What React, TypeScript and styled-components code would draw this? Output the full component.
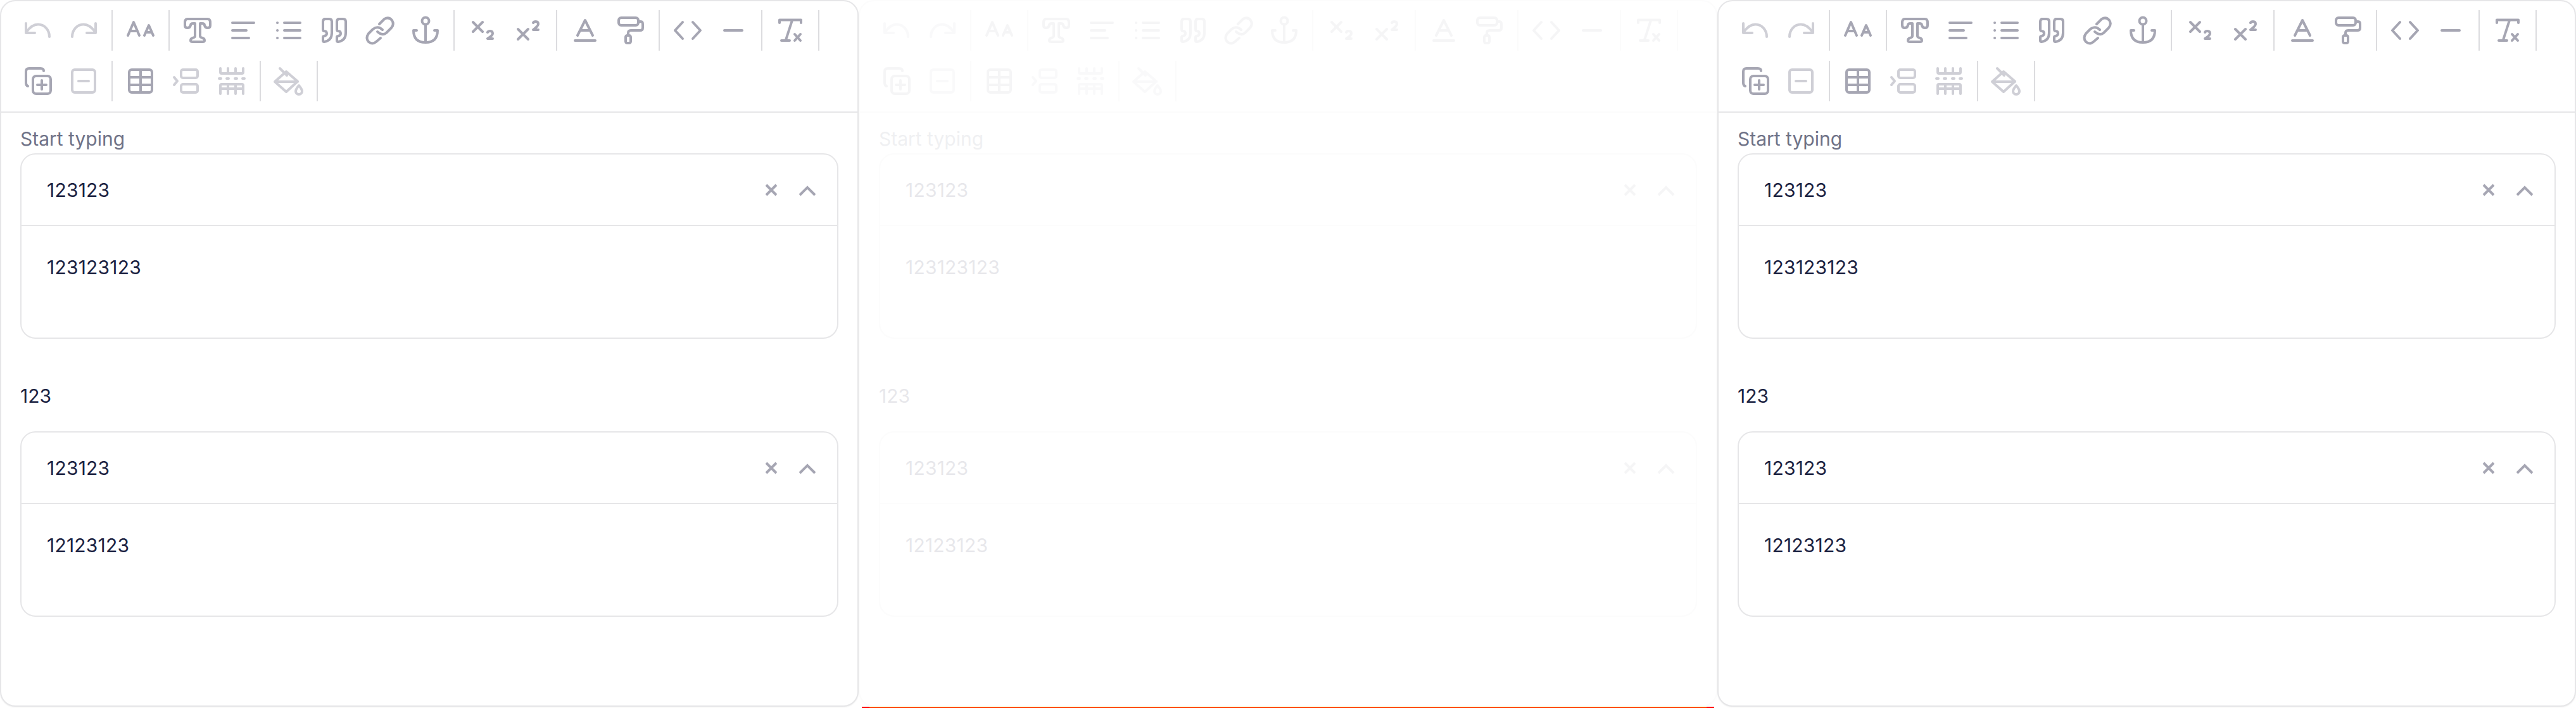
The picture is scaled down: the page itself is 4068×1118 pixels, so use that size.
import React from 'react';
import styled, { createGlobalStyle } from 'styled-components';

const Global = createGlobalStyle`
  html, body { margin: 0; padding: 0; background: #fff; }
  #root { width: 4068px; height: 1118px; }
`;

const Page = styled.div`
  position: relative;
  display: grid;
  grid-template-columns: repeat(3, 1356px);
  height: 1118px;
  overflow: hidden;
  font-family: Inter, "Noto Sans", sans-serif;
`;

const Panel = styled.section<{ $faded?: boolean }>`
  box-sizing: border-box;
  height: 1116px;
  border: 2px solid #e6e6e8;
  border-radius: 24px;
  background: #fff;
  box-shadow: 0 1px 2px rgba(0, 0, 0, 0.06);
  opacity: ${(p) => (p.$faded ? 0.1 : 1)};
`;

const Toolbar = styled.div`
  display: flex;
  flex-wrap: wrap;
  row-gap: 16px;
  align-items: center;
  padding: 14px 22px 16px;
  border-bottom: 2px solid #e6e6e8;
`;

const ToolButton = styled.button<{ $disabled?: boolean }>`
  display: flex;
  width: 72px;
  height: 64px;
  padding: 0;
  border: 0;
  background: none;
  color: ${(p) => (p.$disabled ? '#cfcfd6' : '#a6a6b3')};
`;

const ToolSvg = styled.svg`
  width: 72px;
  height: 64px;
  fill: none;
  stroke: currentColor;
  stroke-width: 4;
  stroke-linecap: round;
  stroke-linejoin: round;
`;

const Separator = styled.span`
  width: 2px;
  height: 64px;
  margin: 0 8px;
  background: #dcdcdf;
`;

const Body = styled.div`
  display: flex;
  flex-direction: column;
  padding: 23px 30px 0;
`;

const FieldLabel = styled.div<{ $muted?: boolean; $gap: number; $top?: number }>`
  height: 36px;
  margin-top: ${(p) => p.$top ?? 0}px;
  margin-bottom: ${(p) => p.$gap}px;
  font-size: 30px;
  line-height: 36px;
  color: ${(p) => (p.$muted ? '#6f7287' : '#1c2342')};
`;

const Card = styled.div`
  box-sizing: border-box;
  height: 293px;
  border: 2px solid #e6e6e8;
  border-radius: 24px;
`;

const CardHeader = styled.div`
  box-sizing: border-box;
  display: flex;
  align-items: center;
  height: 113px;
  padding: 0 33px 0 40px;
  border-bottom: 2px solid #e6e6e8;
`;

const CardTitle = styled.div`
  flex: 1;
  font-size: 30px;
  line-height: 36px;
  letter-spacing: 0.2px;
  color: #1c2342;
`;

const CardText = styled.div`
  padding: 47px 40px 0;
  font-size: 30px;
  line-height: 36px;
  letter-spacing: 0.2px;
  color: #1c2342;
`;

const HeaderIcon = styled.svg<{ $w: number; $gap?: number }>`
  width: ${(p) => p.$w}px;
  height: 24px;
  margin-left: ${(p) => p.$gap ?? 0}px;
  fill: none;
  stroke: #a6a6b3;
  stroke-width: 4;
`;

const LoadBar = styled.div`
  position: absolute;
  left: 1361px;
  bottom: 0;
  width: 1346px;
  height: 2px;
  background: #ff0000;
`;

const LoadBarTop = styled.div`
  position: absolute;
  left: 12px;
  right: 12px;
  top: 0;
  height: 1px;
  background: #ffff00;
`;

const quote = 'M42 14H50Q54 14 54 18V36Q54 48 42 50Q40 50 40 48V43Q40 41 42 41Q46 40 46 37Q46 33 42 33Q40 33 40 30V18Q40 14 44 14';

const icons: Record<string, React.ReactNode> = {
  undo: <path d="M17 21V36H31M18 34C24 26 30 22.5 36 22.5C46 22.5 54 31 54 42" />,
  redo: <path d="M55 21V36H41M54 34C48 26 42 22.5 36 22.5C26 22.5 18 31 18 42" />,
  size: <path d="M16 40L25 19L34 40M19 33H31M42 40L49 24L56 40M44.500 35H53.500" />,
  type: <path d="M20 14H52Q56 14 56 20V24Q56 28 52 28Q48 28 47 24Q47 21 43 21H40V41Q40 43 44 44Q47 45 47 48Q47 50 44 50H28Q25 50 25 48Q25 45 28 44Q32 43 32 41V21H29Q25 21 25 24Q24 28 20 28Q16 28 16 24V20Q16 14 20 14Z" />,
  align: <path d="M19 20H53M19 32H41M19 44H45" />,
  list: <path d="M29 20H54M29 32H54M29 44H54M18 20H18.100M18 32H18.100M18 44H18.100" />,
  quote: (
    <>
      <path d={quote} />
      <path d={quote} transform="translate(-22 0)" />
    </>
  ),
  link: <path d="M35 22L43 14Q50 10 55 16Q59 22 54 28L46 36Q40 41 32 34M40 31Q33 24 25 30L18 37Q13 44 18 50Q24 55 30 50L37 44" />,
  anchor: (
    <>
      <circle cx="36" cy="17" r="5.500" />
      <path d="M36 23V51M22 32H17Q17 51 36 51Q55 51 55 32H50" />
    </>
  ),
  sub: <path d="M21 19L36 34M36 19L21 34M44 35Q45 33 48 33Q52 33 52 37Q52 40 44 45H52" />,
  sup: <path d="M20 30L36 46M36 30L20 46M44 20Q45 18 48 18Q52 18 52 22Q52 25 44 31H52" />,
  color: <path d="M24 40L36 16L48 40M28 32H44M20 48H52" />,
  roller: (
    <>
      <rect x="17" y="12" width="31" height="12" rx="4" />
      <path d="M49 18H52Q55 18 55 22V28Q55 32 51 32H36Q32 32 32 36V40" />
      <rect x="28" y="40" width="8" height="12" rx="2.500" />
    </>
  ),
  code: <path d="M28 19L16 32L28 45M44 19L56 32L44 45" />,
  rule: <path d="M22 32H50" />,
  clear: <path d="M19 20V15.500H53V20M39 16L29 47M22 48H35M43 38L52 48M52 38L43 48" />,
  copyPlus: (
    <>
      <path d="M45 16Q45 12 40 12H22Q17 12 17 17V35Q17 39 20 40" />
      <rect x="28" y="24" width="28" height="28" rx="5" />
      <path d="M42 31V45M35 38H49" />
    </>
  ),
  minus: (
    <>
      <rect x="18" y="14" width="36" height="36" rx="4" />
      <path d="M28 32H44" />
    </>
  ),
  table: (
    <>
      <rect x="18" y="14" width="36" height="36" rx="4" />
      <path d="M18 26H54M18 38H54M36 14V50" />
    </>
  ),
  splitRow: (
    <>
      <path d="M17 26L22 32L17 38" />
      <rect x="28" y="14" width="26" height="13" rx="3" />
      <rect x="28" y="37" width="26" height="13" rx="3" />
    </>
  ),
  splitCol: <path d="M18 12V18Q18 20 20 20H52Q54 20 54 18V12M30 12V20M42 12V20M16 28H19M28 28H31M41 28H44M53 28H56M18 52V39Q18 37 20 37H52Q54 37 54 39V52M30 37V52M42 37V52M18 44H54" />,
  fill: (
    <>
      <path d="M22 12L33 23M32 17L50 32.500L32 49L14 33L32 17ZM14 33H50" />
      <path d="M52 39Q47 45 47 48A5 5 0 0 0 57 48Q57 45 52 39Z" />
    </>
  ),
};

type Tool = { name: string; disabled?: boolean } | 'sep';

const tools: Tool[] = [
  { name: 'undo', disabled: true },
  { name: 'redo', disabled: true },
  'sep',
  { name: 'size' },
  'sep',
  { name: 'type' },
  { name: 'align' },
  { name: 'list' },
  { name: 'quote' },
  { name: 'link' },
  { name: 'anchor' },
  'sep',
  { name: 'sub' },
  { name: 'sup' },
  'sep',
  { name: 'color' },
  { name: 'roller' },
  'sep',
  { name: 'code' },
  { name: 'rule' },
  'sep',
  { name: 'clear' },
  'sep',
  { name: 'copyPlus' },
  { name: 'minus', disabled: true },
  'sep',
  { name: 'table' },
  { name: 'splitRow', disabled: true },
  { name: 'splitCol', disabled: true },
  'sep',
  { name: 'fill', disabled: true },
  'sep',
];

function EditorToolbar() {
  return (
    <Toolbar>
      {tools.map((tool, i) =>
        tool === 'sep' ? (
          <Separator key={i} />
        ) : (
          <ToolButton key={i} $disabled={tool.disabled} aria-label={tool.name}>
            <ToolSvg viewBox="0 0 72 64">{icons[tool.name]}</ToolSvg>
          </ToolButton>
        ),
      )}
    </Toolbar>
  );
}

function Accordion({ title, text }: { title: string; text: string }) {
  return (
    <Card>
      <CardHeader>
        <CardTitle>{title}</CardTitle>
        <HeaderIcon $w={24} viewBox="0 0 24 24">
          <path d="M4 4L20 20M20 4L4 20" />
        </HeaderIcon>
        <HeaderIcon $w={28} $gap={31} viewBox="0 0 28 24">
          <path d="M2 20L14 8L26 20" />
        </HeaderIcon>
      </CardHeader>
      <CardText>{text}</CardText>
    </Card>
  );
}

function Editor({ faded }: { faded?: boolean }) {
  return (
    <Panel $faded={faded}>
      <EditorToolbar />
      <Body>
        <FieldLabel $muted $gap={5}>Start typing</FieldLabel>
        <Accordion title="123123" text="123123123" />
        <FieldLabel $gap={38} $top={72}>123</FieldLabel>
        <Accordion title="123123" text="12123123" />
      </Body>
    </Panel>
  );
}

export default function App() {
  return (
    <Page>
      <Global />
      <Editor />
      <Editor faded />
      <Editor />
      <LoadBar>
        <LoadBarTop />
      </LoadBar>
    </Page>
  );
}
